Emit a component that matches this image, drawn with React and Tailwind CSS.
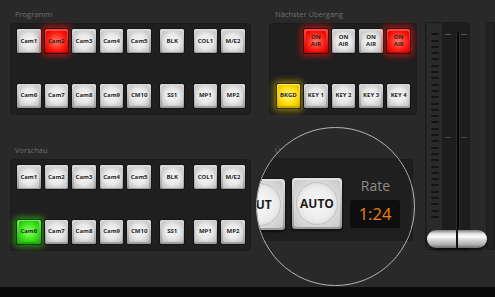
import React from "react";

const FONT = { fontFamily: '"Open Sans", "Liberation Sans", sans-serif' };

const OUTER = {
  white: "border-[#151515] bg-[linear-gradient(#dcdcdc,#9c9c9c)]",
  red: "border-[#3a0000] bg-[linear-gradient(#ff4a40,#c40000)] shadow-[0_0_6px_2px_rgba(255,20,10,0.6)]",
  green: "border-[#0b3a00] bg-[linear-gradient(#6cf04a,#1fa80c)] shadow-[0_0_6px_2px_rgba(60,230,20,0.55)]",
  yellow: "border-[#3a3000] bg-[linear-gradient(#fff25a,#c9a600)] shadow-[0_0_6px_2px_rgba(250,215,0,0.5)]",
};
const INNER = {
  white: "bg-[radial-gradient(circle,#f6f6f6_0%,#e8e8e8_50%,#d2d2d2_72%,#c4c4c4_100%)]",
  red: "bg-[radial-gradient(circle,#ff7a68_0%,#ff2a1c_50%,#f01008_75%,#d80000_100%)]",
  green: "bg-[radial-gradient(circle,#8cff6a_0%,#48e826_50%,#30d014_75%,#22b80c_100%)]",
  yellow: "bg-[radial-gradient(circle,#fff79a_0%,#ffe21a_50%,#f5cf00_75%,#e2b800_100%)]",
};

function Btn({ label, color = "white", two }) {
  return (
    <div className={`w-[25.6px] h-[26px] shrink-0 rounded-[2.5px] border p-[1.5px] ${OUTER[color]}`}>
      <div
        className={`w-full h-full rounded-[2px] flex flex-col items-center justify-center text-[#262626] font-bold text-[6px] leading-[7px] ${INNER[color]}`}
        style={FONT}
      >
        {two ? (
          <>
            <span>{two[0]}</span>
            <span>{two[1]}</span>
          </>
        ) : (
          <span>{label}</span>
        )}
      </div>
    </div>
  );
}

function Row({ items, green, red }) {
  return (
    <div className="flex">
      <div className="flex gap-[2px]">
        {items.slice(0, 5).map((l) => (
          <Btn key={l} label={l} color={l === red ? "red" : l === green ? "green" : "white"} />
        ))}
      </div>
      <div className="ml-[7.5px]">
        <Btn label={items[5]} />
      </div>
      <div className="ml-[7.5px] flex gap-[2px]">
        <Btn label={items[6]} />
        <Btn label={items[7]} />
      </div>
    </div>
  );
}

function Label({ children, className = "" }) {
  return (
    <div className={`text-[7.5px] leading-[10px] text-[#6f6f6f] ${className}`} style={FONT}>
      {children}
    </div>
  );
}

function BusPanel({ red, green }) {
  return (
    <div className="h-[92px] rounded-[4px] bg-[#1f1f1f] border border-[#1b1b1b] px-[5px] pt-[4.5px] pb-[5px] flex flex-col justify-between">
      <Row items={["Cam1", "Cam2", "Cam3", "Cam4", "Cam5", "BLK", "COL1", "M/E2"]} red={red} green={green} />
      <Row items={["Cam6", "Cam7", "Cam8", "Cam9", "CM10", "SS1", "MP1", "MP2"]} red={red} green={green} />
    </div>
  );
}

function BigBtn({ label }) {
  return (
    <div className="w-[52px] h-[53px] shrink-0 rounded-[4px] border border-[#151515] bg-[linear-gradient(#e4e4e4,#9a9a9a)] p-[2px] shadow-[0_1px_2px_rgba(0,0,0,0.6)]">
      <div className="relative w-full h-full rounded-[3px] bg-[radial-gradient(circle,#f8f8f8_0%,#ececec_50%,#d6d6d6_70%,#c8c8c8_100%)] flex items-center justify-center">
        <div className="absolute inset-[2px] rounded-full border border-[#c0c0c0]" />
        <span className="relative text-[12px] font-bold text-[#1c1c1c]" style={FONT}>
          {label}
        </span>
      </div>
    </div>
  );
}

export default function App() {
  const ticks = Array.from({ length: 30 });
  return (
    <div className="w-[495px] h-[297px] bg-[#292929] relative overflow-hidden flex flex-col">
      <div className="h-[287px] flex">
        {/* Left column */}
        <div className="ml-[10px] w-[241px] flex flex-col">
          <Label className="pt-[9px] h-[22.5px] pl-[5px]">Programm</Label>
          <BusPanel red="Cam2" />
          <Label className="pt-[30.5px] h-[44px] pl-[5px]">Vorschau</Label>
          <BusPanel green="Cam6" />
        </div>

        {/* Right column */}
        <div className="ml-[18px] w-[148.5px] flex flex-col">
          <Label className="pt-[9px] h-[22.5px] pl-[6px]">Nächster Übergang</Label>
          <div className="h-[92px] rounded-[4px] bg-[#1f1f1f] border border-[#1b1b1b] pl-[5.5px] pr-[5px] pt-[4.5px] pb-[5px] flex flex-col justify-between">
            <div className="flex gap-[2px] justify-end">
              <Btn two={["ON", "AIR"]} color="red" />
              <Btn two={["ON", "AIR"]} />
              <Btn two={["ON", "AIR"]} />
              <Btn two={["ON", "AIR"]} color="red" />
            </div>
            <div className="flex gap-[2px]">
              <Btn label="BKGD" color="yellow" />
              <Btn label="KEY 1" />
              <Btn label="KEY 2" />
              <Btn label="KEY 3" />
              <Btn label="KEY 4" />
            </div>
          </div>
          <Label className="pt-[30.5px] h-[44px] pl-[6px]">Übergang</Label>
          <div className="w-[144px] h-[82.5px] rounded-[4px] bg-[#1f1f1f] border border-[#1b1b1b]" />
        </div>

        {/* Fader */}
        <div className="ml-[8px] mt-[22.3px] w-[47.6px] h-[228px] relative rounded-[3px] bg-[#222] border border-[#1b1b1b] flex">
          <div className="w-[14.7px] ml-[1px] bg-[#2a2a2a] flex flex-col items-center gap-[4.3px] pt-[10px]">
            {ticks.map((_, i) => (
              <div key={i} className="w-[7.7px] h-[2px] rounded-[1px] bg-[#141414]" />
            ))}
          </div>
          <div className="flex-1 relative bg-[#1d1d1d]">
            <div className="absolute left-[14px] top-[9px] bottom-[2px] w-[4px] rounded-t-full bg-[#050505] border-x border-[#2c2c2c]" />
            <div className="absolute left-[2.5px] top-[11px] w-[6px] h-[1px] bg-[#555]" />
            <div className="absolute right-[2px] top-[11px] w-[6px] h-[1px] bg-[#555]" />
            <div className="absolute left-[2.5px] top-[114px] w-[6px] h-[1px] bg-[#4a4a4a]" />
            <div className="absolute right-[2px] top-[114px] w-[6px] h-[1px] bg-[#4a4a4a]" />
          </div>
          <div className="absolute left-[1px] top-[207px] w-[60px] h-[17.5px] rounded-full bg-[linear-gradient(#7c7c7c_0%,#e8e8e8_22%,#fbfbfb_38%,#d6d6d6_55%,#b0b0b0_80%,#6a6a6a_100%)] shadow-[0_2px_3px_rgba(0,0,0,0.7)]">
            <div className="absolute left-[29px] top-0 bottom-0 w-[2px] bg-[#151515]" />
          </div>
        </div>

        {/* Far right panel */}
        <div className="ml-[16px] mt-[22.3px] w-[10px] h-[228px] rounded-l-[3px] bg-[#222] border border-[#1b1b1b]" />
      </div>
      <div className="h-[10px] bg-[#0a0a0a]" />

      {/* Magnifier */}
      <div className="absolute left-[256px] top-[127px] w-[159px] h-[159px] rounded-full overflow-hidden border-[1.5px] border-[#b4b4b4] bg-[#292929]">
        <div className="absolute left-[-30px] top-[30px] w-[184px] h-[83px] rounded-[5px] bg-[#1f1f1f]" />
        <div className="absolute left-[-23px] top-[50px]">
          <BigBtn label="CUT" />
        </div>
        <div className="absolute left-[34px] top-[49px]">
          <BigBtn label="AUTO" />
        </div>
        <div className="absolute left-[93px] top-[48px] w-[51px] text-center text-[14px] leading-[20px] text-[#8a8a8a]" style={FONT}>
          Rate
        </div>
        <div className="absolute left-[93px] top-[72px] w-[50px] h-[28px] rounded-[3px] bg-[#0e0e0e] flex items-center justify-center text-[16.5px] text-[#ea820e]" style={FONT}>
          1:24
        </div>
      </div>
    </div>
  );
}
